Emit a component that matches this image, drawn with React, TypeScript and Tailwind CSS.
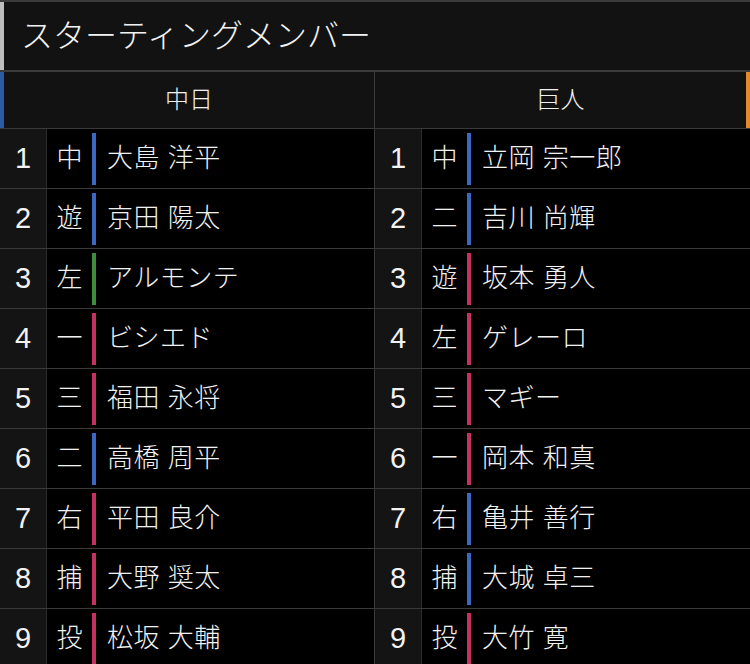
import React from "react";

type Player = { no: number; pos: string; name: string; bar: "blue" | "green" | "red" };

const barColor = {
  blue: "bg-[#3b68c0]",
  green: "bg-[#3f8d3c]",
  red: "bg-[#c53262]",
};

const dragons: Player[] = [
  { no: 1, pos: "中", name: "大島 洋平", bar: "blue" },
  { no: 2, pos: "遊", name: "京田 陽太", bar: "blue" },
  { no: 3, pos: "左", name: "アルモンテ", bar: "green" },
  { no: 4, pos: "一", name: "ビシエド", bar: "red" },
  { no: 5, pos: "三", name: "福田 永将", bar: "red" },
  { no: 6, pos: "二", name: "高橋 周平", bar: "blue" },
  { no: 7, pos: "右", name: "平田 良介", bar: "red" },
  { no: 8, pos: "捕", name: "大野 奨太", bar: "red" },
  { no: 9, pos: "投", name: "松坂 大輔", bar: "red" },
];

const giants: Player[] = [
  { no: 1, pos: "中", name: "立岡 宗一郎", bar: "blue" },
  { no: 2, pos: "二", name: "吉川 尚輝", bar: "blue" },
  { no: 3, pos: "遊", name: "坂本 勇人", bar: "red" },
  { no: 4, pos: "左", name: "ゲレーロ", bar: "red" },
  { no: 5, pos: "三", name: "マギー", bar: "red" },
  { no: 6, pos: "一", name: "岡本 和真", bar: "red" },
  { no: 7, pos: "右", name: "亀井 善行", bar: "blue" },
  { no: 8, pos: "捕", name: "大城 卓三", bar: "blue" },
  { no: 9, pos: "投", name: "大竹 寛", bar: "red" },
];

function PlayerCell({ p, left }: { p: Player; left?: boolean }) {
  return (
    <div
      className={
        left
          ? "flex h-full w-[375px] items-center border-r border-[#3a3a3a]"
          : "flex h-full flex-1 items-center"
      }
    >
      {/* 打順 */}
      <div className="flex h-full w-[47px] items-center justify-center border-r border-[#2c2c2c] bg-[#141414] text-[29px]">
        {p.no}
      </div>
      {/* 守備 */}
      <div className="flex w-[45px] justify-center text-[26px]">{p.pos}</div>
      <div className={`h-[52px] w-[4px] ${barColor[p.bar]}`} />
      <div className="pl-[11px] text-[26px] tracking-[0.5px] whitespace-pre">{p.name}</div>
    </div>
  );
}

export default function App() {
  return (
    <div
      className="h-[664px] w-[750px] overflow-hidden bg-black font-light text-[#f2f2f2]"
      style={{ fontFamily: '"Liberation Sans", "Noto Sans CJK JP", sans-serif' }}
    >
      {/* タイトル */}
      <div className="flex h-[72px] border-t-2 border-b-2 border-[#3a3a3a] bg-[#121212]">
        <div className="w-[4px] bg-[#bdbdbd]" />
        <div className="flex items-center pl-[17px] text-[32px] leading-none">
          スターティングメンバー
        </div>
      </div>

      {/* チーム名 */}
      <div className="flex h-[57px] border-b border-[#3a3a3a] bg-[#121212]">
        <div className="flex w-[375px] border-r border-[#3a3a3a]">
          <div className="w-[4px] bg-[#2a5ba3]" />
          <div className="flex flex-1 items-center justify-center text-[24px]">中日</div>
        </div>
        <div className="flex flex-1">
          <div className="flex flex-1 items-center justify-center text-[24px]">巨人</div>
          <div className="w-[4px] bg-[#e38a2e]" />
        </div>
      </div>

      {/* 打順 */}
      {dragons.map((d, i) => (
        <div key={d.no} className="flex h-[60px] border-b border-[#3a3a3a]">
          <PlayerCell p={d} left />
          <PlayerCell p={giants[i]} />
        </div>
      ))}
    </div>
  );
}
